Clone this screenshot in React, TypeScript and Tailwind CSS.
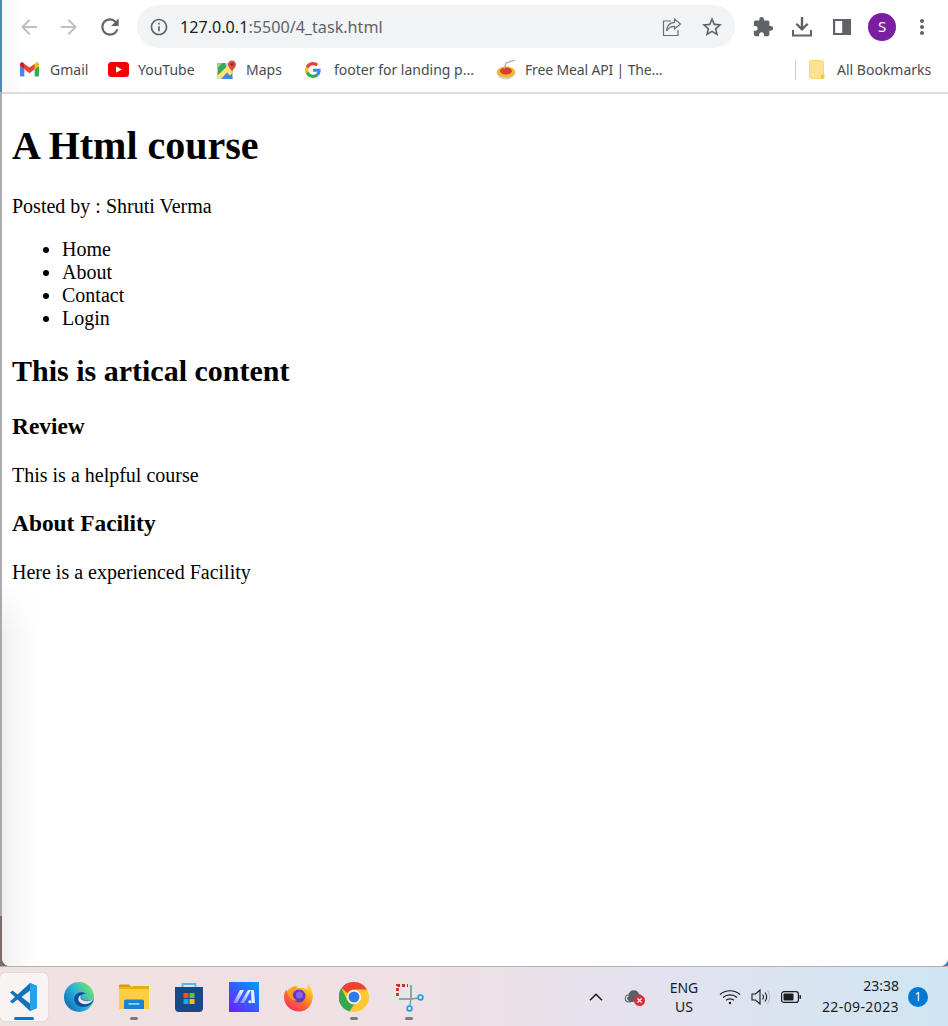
import type { ReactNode } from "react";
import { MdArrowBack, MdArrowForward, MdExtension, MdInfoOutline, MdMoreVert, MdRefresh, MdStarBorder } from "react-icons/md";

const uiFont = "font-['Noto_Sans','Open_Sans',sans-serif]";

function GmailIcon() {
  return (
    <svg viewBox="0 0 256 193" className="h-[15px] w-[19px]">
      <path fill="#4285F4" d="M58.182 192.05V93.14L27.507 65.077 0 49.504v125.091c0 9.658 7.825 17.455 17.455 17.455h40.727Z" />
      <path fill="#34A853" d="M197.818 192.05h40.727c9.659 0 17.455-7.826 17.455-17.455V49.505l-31.156 17.837-27.026 25.798v98.91Z" />
      <path fill="#EA4335" d="m58.182 93.14-4.174-38.647 4.174-36.989L128 69.868l69.818-52.364 4.669 34.992-4.669 40.644L128 145.504z" />
      <path fill="#FBBC04" d="M197.818 17.504V93.14L256 49.504V26.231c0-21.585-24.64-33.89-41.89-20.945l-16.292 12.218Z" />
      <path fill="#C5221F" d="m0 49.504 26.759 20.07L58.182 93.14V17.504L41.89 5.286C24.61-7.66 0 4.646 0 26.23v23.273Z" />
    </svg>
  );
}

function YoutubeIcon() {
  return (
    <svg viewBox="0 0 21 15" className="h-[15px] w-[21px]">
      <rect width="21" height="15" rx="3.5" fill="#f40000" />
      <path d="M8 4.2 14 7.5 8 10.8Z" fill="#fff" />
    </svg>
  );
}

function MapsIcon() {
  return (
    <svg viewBox="0 0 20 20" className="h-[20px] w-[20px]">
      <path d="M0.500 3h15v16h-15Z" fill="#3aa757" />
      <path d="M8 3h7.500v5L10 9Z" fill="#c9cdd2" />
      <path d="M0.500 3h5L0.500 8Z" fill="#8fd19e" />
      <path d="M0.500 19v-3.500L11.500 5l4 5v3L9.500 19Z" fill="#fbe27a" />
      <path d="M4 19 10 12.500 15.500 18v1Z" fill="#4285f4" />
      <path d="M15 0.500c2.400 0 4 1.800 4 3.900 0 2.500-2.700 4.300-4 7-1.300-2.700-4-4.500-4-7C11 2.300 12.600 0.500 15 0.500Z" fill="#dd4b3e" />
      <circle cx="15" cy="4.400" r="1.400" fill="#8a2a22" />
    </svg>
  );
}

function GoogleIcon() {
  return (
    <svg viewBox="0 0 48 48" className="h-[16px] w-[16px]">
      <path fill="#EA4335" d="M24 9.5c3.54 0 6.71 1.22 9.21 3.6l6.85-6.85C35.9 2.38 30.47 0 24 0 14.62 0 6.51 5.38 2.56 13.22l7.98 6.19C12.43 13.72 17.74 9.5 24 9.5z" />
      <path fill="#4285F4" d="M46.98 24.55c0-1.57-.15-3.09-.38-4.55H24v9.02h12.94c-.58 2.96-2.26 5.48-4.78 7.18l7.73 6c4.51-4.18 7.09-10.36 7.09-17.65z" />
      <path fill="#FBBC05" d="M10.53 28.59c-.48-1.45-.76-2.99-.76-4.59s.27-3.14.76-4.59l-7.98-6.19C.92 16.46 0 20.12 0 24c0 3.88.92 7.54 2.56 10.78l7.97-6.19z" />
      <path fill="#34A853" d="M24 48c6.48 0 11.93-2.13 15.89-5.81l-7.73-6c-2.15 1.45-4.92 2.3-8.16 2.3-6.26 0-11.57-4.22-13.47-9.91l-7.98 6.19C6.51 42.62 14.62 48 24 48z" />
    </svg>
  );
}

function MealIcon() {
  return (
    <svg viewBox="0 0 20 20" className="h-[20px] w-[20px]">
      <ellipse cx="10" cy="13" rx="9.500" ry="6.500" fill="#d9d6cf" />
      <ellipse cx="10" cy="12" rx="9" ry="5.500" fill="#f2b632" />
      <ellipse cx="10" cy="11" rx="6" ry="3.500" fill="#d8402a" />
      <path d="M8 9 10 3l9-3" stroke="#b9b3a6" strokeWidth="1.400" fill="none" />
    </svg>
  );
}

function FolderBookmarkIcon() {
  return (
    <svg viewBox="0 0 16 19" className="h-[19px] w-[16px]">
      <path d="M1.500 0.500h11a2 2 0 0 1 2 2V18.500H1.500a1 1 0 0 1-1-1V1.500a1 1 0 0 1 1-1Z" fill="#fde293" stroke="#f9d774" />
      <path d="M12 18.500v-4h3.500v4Z" fill="#f5c842" />
    </svg>
  );
}

function ShareIcon() {
  return (
    <svg viewBox="0 0 20 20" fill="none" stroke="#6b6f73" strokeWidth="1.200" className="h-[20px] w-[20px]">
      <path d="M9 4H1.500v14.500H16V13" />
      <path d="M12.500 2 18.500 7l-6 5V9.300C9 9.300 6.500 10.500 4.500 14c.3-4.500 3-8.300 8-8.600Z" />
    </svg>
  );
}

function DownloadIcon() {
  return (
    <svg viewBox="0 0 20 20" fill="#5f6368" className="h-[20px] w-[20px]">
      <path d="M8.800 0h2.400v9.500l3.700-3.600 1.600 1.600L10 14 3.500 7.500l1.600-1.600 3.700 3.600Z" />
      <path d="M0 13h2v4.500h16V13h2v6.500H0Z" />
    </svg>
  );
}

function SidePanelIcon() {
  return (
    <svg viewBox="0 0 18 18" className="h-[18px] w-[18px]">
      <path fillRule="evenodd" fill="#5f6368" d="M0 1h18v16H0ZM2.200 3v12h7V3Z" />
    </svg>
  );
}

function VsCodeIcon() {
  return (
    <svg viewBox="0 0 30 30" className="h-[30px] w-[30px]">
      <path d="M1 10.500 3.500 8.500 8.500 12.500 21 1l7 3v22l-7 3L8.500 17.500 3.500 21.500 1 19.500 6 15Z" fill="#0f74bd" />
      <path fillRule="evenodd" d="M21 1l7 3v22l-7 3Z" fill="#22a3ec" />
      <path d="M21 8.500 12.500 15l8.500 6.500Z" fill="#f6eeee" />
    </svg>
  );
}

function EdgeIcon() {
  return (
    <svg viewBox="0 0 30 30" className="h-[30px] w-[30px]">
      <defs>
        <linearGradient id="edge-a" x1="0" y1="1" x2="1" y2="0.300">
          <stop offset="0" stopColor="#0b57a4" />
          <stop offset="0.550" stopColor="#29b0dc" />
          <stop offset="1" stopColor="#6fe36a" />
        </linearGradient>
      </defs>
      <circle cx="15" cy="15" r="15" fill="url(#edge-a)" />
      <path d="M30 17c-2 1.500-5 2-8.500 1.500-3-.5-4.500-1.500-4.500-3.500s2-3.500 5-3.500c-4-2.500-10-1-11.500 3.500-1.500 5 2.500 10 9 10 4.500 0 9-3 10.500-8Z" fill="#0c4f9a" />
      <path d="M17.500 13c-3 1-4 4-2.500 6.500 1.500 2 4.500 3 8 2.500 2-.5 5-2 6.500-5-2 1.500-5 2.500-8 2-3-.5-5-1.500-5-3.500 0-1 .5-2 1-2.500Z" fill="#f3e4e6" />
    </svg>
  );
}

function ExplorerIcon() {
  return (
    <svg viewBox="0 0 30 30" className="h-[30px] w-[30px]">
      <path d="M0 3.500a1 1 0 0 1 1-1h9l3 3h-13Z" fill="#d99e00" />
      <path d="M0 5.500h12l2-1.500h16v23H0Z" fill="#ffcf40" />
      <path d="M0 5.500h12l2-1.500h16v3H0Z" fill="#e8ad10" />
      <path d="M5 27v-8a1.500 1.500 0 0 1 1.500-1.500h17A1.500 1.500 0 0 1 25 19v8Z" fill="#1884d6" />
      <rect x="9.500" y="21" width="11" height="1.800" fill="#8fd0f7" />
    </svg>
  );
}

function StoreIcon() {
  return (
    <svg viewBox="0 0 30 30" className="h-[30px] w-[30px]">
      <path d="M8.500 6V2h13v4" fill="none" stroke="#3fc3ee" strokeWidth="1.800" />
      <path d="M1 5h28v21a4 4 0 0 1-4 4H5a4 4 0 0 1-4-4Z" fill="#174a85" />
      <rect x="9.500" y="11" width="5" height="5" fill="#e8532b" />
      <rect x="15.500" y="11" width="5" height="5" fill="#6cbb3c" />
      <rect x="9.500" y="17" width="5" height="5" fill="#1aa3ee" />
      <rect x="15.500" y="17" width="5" height="5" fill="#fdbb11" />
    </svg>
  );
}

function SlashLogoIcon() {
  return (
    <svg viewBox="0 0 30 30" className="h-[30px] w-[30px]">
      <defs>
        <linearGradient id="slash-a" x1="0" y1="1" x2="1" y2="0">
          <stop offset="0" stopColor="#6d1cff" />
          <stop offset="1" stopColor="#009dff" />
        </linearGradient>
        <linearGradient id="slash-b" x1="0" y1="1" x2="1" y2="0">
          <stop offset="0" stopColor="#ffffff" stopOpacity="0.300" />
          <stop offset="1" stopColor="#ffffff" />
        </linearGradient>
      </defs>
      <rect width="30" height="30" fill="url(#slash-a)" />
      <path d="M11 8h4l-7 13H4Z" fill="url(#slash-b)" />
      <path d="M19 8h3L15 21h-4Z" fill="url(#slash-b)" />
      <path d="M22 8h3l1 13h-3.500Z M20 18.500a1.500 1.500 0 1 1 0 2.600 1.500 1.500 0 0 1 0-2.600Z" fill="#e8efff" />
    </svg>
  );
}

function FirefoxIcon() {
  return (
    <svg viewBox="0 0 30 30" className="h-[30px] w-[30px]">
      <defs>
        <linearGradient id="fox-a" x1="0.800" y1="0" x2="0.200" y2="1">
          <stop offset="0" stopColor="#ffe14a" />
          <stop offset="0.300" stopColor="#ffb020" />
          <stop offset="0.600" stopColor="#ff6a2a" />
          <stop offset="1" stopColor="#f0296e" />
        </linearGradient>
      </defs>
      <path d="M24 0c1 3 4 7 4.500 11 1.500 8-3 18.500-13.500 18.500C6.500 29.500 0 23 0 15c0-3 1-6 2.500-7.500 0 1.500.5 2.500 1.500 3C5.500 6.500 9 4 13 4c-1 1-1.500 2-1.500 2.500 4-1.500 9-1 12 1 .5-2.500 0-5 .5-7.500Z" fill="url(#fox-a)" />
      <circle cx="15" cy="14" r="6.500" fill="#5b3cc4" />
      <path d="M3 9c3-3.500 8-5 12-4 -2.500 .5-5 2-6 5 -1 3 .5 7 4 8.500-5 .5-9-3-10-9.500Z" fill="#ff9a24" />
      <circle cx="15.500" cy="13" r="3.500" fill="#8f5fe8" />
    </svg>
  );
}

function ChromeIcon() {
  return (
    <svg viewBox="0 0 30 30" className="h-[30px] w-[30px]">
      <circle cx="15" cy="15" r="15" fill="#fcc934" />
      <path d="M15 0a15 15 0 0 1 13 7.500H15a7.500 7.500 0 0 0-6.500 3.750L2.500 6A15 15 0 0 1 15 0Z" fill="#ea4335" />
      <path d="M2.500 6 8.500 18.750A7.500 7.500 0 0 0 15 22.500l-4.500 7A15 15 0 0 1 2.500 6Z" fill="#34a853" />
      <circle cx="15" cy="15" r="7" fill="#fff" />
      <circle cx="15" cy="15" r="5.500" fill="#2f7ae8" />
    </svg>
  );
}

function SnipIcon() {
  return (
    <svg viewBox="0 0 30 30" className="h-[30px] w-[30px]">
      <rect x="0" y="0" width="22" height="22" rx="2.500" fill="#e3e7e7" />
      <path d="M3.500 14V3.500H14" fill="none" stroke="#c8321e" strokeWidth="2.800" strokeDasharray="3 2" />
      <path d="M17 3v14H5" fill="none" stroke="#9aa0a3" strokeWidth="2" />
      <path d="M17 17 15.500 25M17 17l8-1" stroke="#8b9094" strokeWidth="1.300" />
      <circle cx="26.500" cy="15.500" r="2.300" fill="#fff" stroke="#1e9fe6" strokeWidth="1.800" />
      <circle cx="15.500" cy="26.500" r="2.300" fill="#fff" stroke="#1e9fe6" strokeWidth="1.800" />
    </svg>
  );
}

function CloudOffIcon() {
  return (
    <svg viewBox="0 0 22 20" className="h-[20px] w-[22px]">
      <path d="M5 15.500a4 4 0 0 1-.5-8 5.500 5.500 0 0 1 10.500-.5 3.500 3.500 0 0 1 1.500 6.500Z" fill="#5b5f63" />
      <path d="M5 14a2.500 2.500 0 0 1-.2-5" stroke="#e8eef2" strokeWidth="1.200" fill="none" />
      <circle cx="15.500" cy="13.500" r="5.500" fill="#e02b37" />
      <path d="M13.500 11.500l4 4M17.500 11.500l-4 4" stroke="#fff" strokeWidth="1.300" />
    </svg>
  );
}

function WifiIcon() {
  return (
    <svg viewBox="0 0 22 16" fill="none" stroke="#1b1b1b" strokeWidth="1.200" className="h-[16px] w-[22px]">
      <path d="M1 5.500c5.500-5 14.500-5 20 0" />
      <path d="M4 8.500c3.800-3.400 10.200-3.400 14 0" />
      <path d="M7 11.300c2.200-1.900 5.800-1.900 8 0" />
      <circle cx="11" cy="14" r="1.200" fill="#1b1b1b" stroke="none" />
    </svg>
  );
}

function VolumeIcon() {
  return (
    <svg viewBox="0 0 20 18" fill="none" stroke="#1b1b1b" strokeWidth="1.100" className="h-[18px] w-[20px]">
      <path d="M1 6v6h3.500L9 16V2L4.500 6Z" />
      <path d="M11.500 6.500c1.200 1.500 1.200 3.500 0 5" />
      <path d="M14 4.500c2 2.700 2 6.300 0 9" />
      <path d="M16.500 2.500c3 3.800 3 9.200 0 13" stroke="#b4bcc2" />
    </svg>
  );
}

function BatteryIcon() {
  return (
    <svg viewBox="0 0 20 12" className="h-[12px] w-[20px]">
      <rect x="0.600" y="0.600" width="16.800" height="10.800" rx="2.500" fill="none" stroke="#1b1b1b" strokeWidth="1.200" />
      <rect x="2.500" y="2.500" width="10" height="7" rx="1" fill="#1b1b1b" />
      <path d="M18.500 4h.5a1 1 0 0 1 1 1v2a1 1 0 0 1-1 1h-.5Z" fill="#1b1b1b" />
    </svg>
  );
}

function Bookmark({ icon, label, className }: { icon: ReactNode; label: string; className: string }) {
  return (
    <div className={`flex items-center ${className}`}>
      {icon}
      <span className="text-[14px] leading-5 text-[#494c50]">{label}</span>
    </div>
  );
}

function TaskbarApp({ icon, running, active }: { icon: ReactNode; running?: boolean; active?: boolean }) {
  return (
    <div className={`flex h-[48px] w-[48px] flex-col items-center rounded-[5px] pt-[9px] ${active ? "bg-white/60 shadow-[0_0_1px_rgba(0,0,0,0.3)]" : ""}`}>
      {icon}
      {active && <div className="mt-[5px] h-[3px] w-[20px] rounded-full bg-[#0078d4]" />}
      {running && <div className="mt-[5px] h-[3px] w-[8px] rounded-full bg-[#7d7a7c]" />}
    </div>
  );
}

export default function App() {
  return (
    <div className={`flex h-[1026px] w-[948px] flex-col overflow-hidden bg-white ${uiFont}`}>
      <div className="flex min-h-0 flex-1">
        <div className="flex w-[2px] flex-col">
          <div className="h-[92px] bg-[#478db3]" />
          <div className="flex-1 bg-[#ababab]" />
          <div className="h-[50px] bg-[#7d6b68]" />
        </div>

        <div className="flex min-w-0 flex-1 bg-[linear-gradient(to_right,#7d6b68_50%,#3f86bd_50%)]">
          <div className="flex min-w-0 flex-1 flex-col overflow-hidden rounded-b-[8px] bg-white">
            <header className="h-[94px] border-b-2 border-[#dcdcdc] bg-[linear-gradient(to_right,#f7f7f7,#ffffff_24px)]">
              <div className="flex h-[53px] items-center">
                <div className="flex w-[135px] items-center pl-[15px] text-[#bdc1c6]">
                  <MdArrowBack size={24} className="text-[#bdc1c6]" />
                  <MdArrowForward size={24} className="ml-[16px] text-[#bdc1c6]" />
                  <MdRefresh size={26} className="ml-[16px] text-[#5f6368]" />
                </div>
                <div className="flex h-[43px] w-[598px] items-center rounded-full bg-[#f1f3f4] pl-[12px] pr-[11px]">
                  <MdInfoOutline size={20} className="text-[#5f6368]" />
                  <span className="ml-[11px] flex-1 text-[16.15px] leading-6 text-[#5f6368]">
                    <span className="text-[#202124]">127.0.0.1</span>:5500/4_task.html
                  </span>
                  <ShareIcon />
                  <MdStarBorder size={24} className="ml-[18px] text-[#5f6368]" />
                </div>
                <div className="flex flex-1 items-center">
                  <MdExtension size={22} className="ml-[17px] text-[#5f6368]" />
                  <div className="ml-[18px]"><DownloadIcon /></div>
                  <div className="ml-[21px]"><SidePanelIcon /></div>
                  <div className="ml-[17px] flex h-[28px] w-[28px] items-center justify-center rounded-full bg-[#7b1fa2] text-[15px] text-white">S</div>
                  <MdMoreVert size={24} className="ml-[14px] text-[#5f6368]" />
                </div>
              </div>

              <div className="flex h-[39px] items-center pb-[6px]">
                <Bookmark icon={<GmailIcon />} label="Gmail" className="ml-[18px] w-[88px] gap-[11px]" />
                <Bookmark icon={<YoutubeIcon />} label="YouTube" className="w-[109px] gap-[9px]" />
                <Bookmark icon={<MapsIcon />} label="Maps" className="w-[88px] gap-[9px]" />
                <Bookmark icon={<GoogleIcon />} label="footer for landing p..." className="w-[191px] gap-[13px]" />
                <Bookmark icon={<MealIcon />} label="Free Meal API | The..." className="w-[299px] gap-[9px] tracking-[-0.15px]" />
                <div className="h-[20px] w-px bg-[#c8cacc]" />
                <Bookmark icon={<FolderBookmarkIcon />} label="All Bookmarks" className="ml-[13px] gap-[12px]" />
              </div>
            </header>

            <main className="px-[10px] font-['Liberation_Serif',serif] text-[20px] leading-[23px] text-black">
              <h1 className="mt-[29px] mb-[26px] text-[40px] font-bold leading-[46px]">A Html course</h1>
              <p className="my-[20px]">Posted by : Shruti Verma</p>
              <ul className="my-[20px] list-disc pl-[50px]">
                <li>Home</li>
                <li>About</li>
                <li>Contact</li>
                <li>Login</li>
              </ul>
              <h2 className="mt-[24px] mb-[25px] text-[30px] font-bold leading-[34px]">This is artical content</h2>
              <h3 className="mt-[23px] mb-[24px] text-[23.4px] font-bold leading-[27px]">Review</h3>
              <p className="my-[23px]">This is a helpful course</p>
              <h3 className="mt-[23px] mb-[24px] text-[23.4px] font-bold leading-[27px]">About Facility</h3>
              <p className="mt-[24px]">Here is a experienced Facility</p>
            </main>
            <div className="flex-1 bg-[linear-gradient(to_bottom,#ffffff,transparent_50px),linear-gradient(to_right,#efefef,#fafafa_20px,#ffffff_42px)]" />
          </div>
        </div>
      </div>

      <footer className="flex h-[60px] items-center border-t border-[#b5aeb0] bg-[linear-gradient(to_right,#f0e1e1,#eee0e4_45%,#e4e2ee_68%,#cfe5f3)]">
        <div className="flex gap-[7px]">
          <TaskbarApp icon={<VsCodeIcon />} active />
          <TaskbarApp icon={<EdgeIcon />} />
          <TaskbarApp icon={<ExplorerIcon />} running />
          <TaskbarApp icon={<StoreIcon />} />
          <TaskbarApp icon={<SlashLogoIcon />} />
          <TaskbarApp icon={<FirefoxIcon />} />
          <TaskbarApp icon={<ChromeIcon />} running />
          <TaskbarApp icon={<SnipIcon />} running />
        </div>
        <div className="ml-auto flex items-center text-[14px] text-[#1b1b1b]">
          <div className="flex w-[38px] justify-center">
            <svg viewBox="0 0 14 8" fill="none" stroke="#1b1b1b" strokeWidth="1.500" className="h-[8px] w-[14px]">
              <path d="M1 7.200 7 1.200l6 6" />
            </svg>
          </div>
          <div className="flex w-[38px] justify-center pl-[2px]"><CloudOffIcon /></div>
          <div className="flex w-[62px] flex-col items-center leading-[19px]">
            <span>ENG</span>
            <span>US</span>
          </div>
          <div className="flex w-[30px] justify-center"><WifiIcon /></div>
          <div className="flex w-[30px] justify-center pl-[2px]"><VolumeIcon /></div>
          <div className="flex w-[32px] justify-center"><BatteryIcon /></div>
          <div className="mb-[2px] flex w-[92px] flex-col items-end leading-[21px]">
            <span>23:38</span>
            <span className="tracking-[0.4px]">22-09-2023</span>
          </div>
          <div className="ml-[9px] mr-[20px] flex h-[20px] w-[20px] items-center justify-center rounded-full bg-[#0078d4] text-[12px] text-white">1</div>
        </div>
      </footer>
    </div>
  );
}
